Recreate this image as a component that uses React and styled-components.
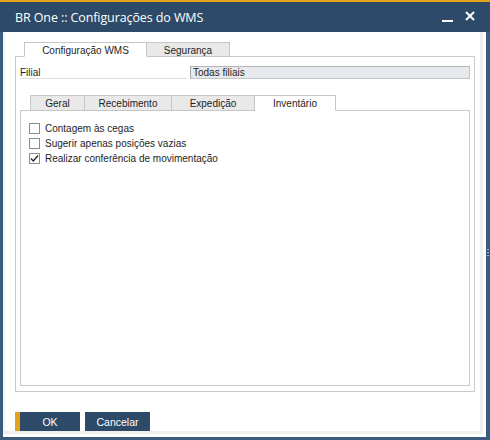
import React, { useState } from 'react';
import styled, { createGlobalStyle } from 'styled-components';

const GlobalStyle = createGlobalStyle`
  html, body {
    margin: 0;
    padding: 0;
    background: #ffffff;
  }
  body {
    font-family: "Liberation Sans", Arial, sans-serif;
  }
`;

const Window = styled.div`
  width: 490px;
  height: 440px;
  box-sizing: border-box;
  display: flex;
  flex-direction: column;
  background: #2d4a69;
  border-top: 1px solid #e3a21a;
  box-shadow: inset 0 1px 0 #e3a21a;
  position: relative;
`;

const TitleBar = styled.div`
  height: 31px;
  display: flex;
  align-items: center;
  padding: 0 14px 0 15px;
  color: #ffffff;
  flex-shrink: 0;
`;

const Title = styled.div`
  flex: 1;
  font-family: "Open Sans", "Noto Sans", sans-serif;
  font-size: 12.5px;
  letter-spacing: -0.1px;
  padding-top: 1px;
`;

const WinButtons = styled.div`
  display: flex;
  align-items: center;
  gap: 12px;
`;

const WinButton = styled.button`
  border: 0;
  background: none;
  padding: 0;
  width: 11px;
  height: 11px;
  display: flex;
  color: #ffffff;
  cursor: pointer;
`;

const Frame = styled.div`
  flex: 1;
  display: flex;
  padding: 0 4px 3px 3px;
  background: #3a5b7c;
`;

const Body = styled.div`
  flex: 1;
  display: flex;
  background: #ffffff;
  padding: 0 3px 3px 0;
`;

const Inner = styled.div`
  flex: 1;
  display: flex;
  flex-direction: column;
  border-right: 3px solid #efefef;
  border-bottom: 3px solid #efefef;
  border-left: 2px solid #f4f4f4;
  padding: 10px 5px 0 10px;
  font-size: 10px;
  color: #1e1e1e;
`;

const TabRow = styled.div`
  display: flex;
  height: ${(p) => p.$h}px;
  margin-left: ${(p) => p.$indent}px;
  position: relative;
  z-index: 1;
  flex-shrink: 0;
`;

const Tab = styled.div`
  width: ${(p) => p.$w}px;
  box-sizing: border-box;
  display: flex;
  align-items: center;
  justify-content: center;
  border: 1px solid #c6c6c6;
  border-left-width: ${(p) => (p.$first ? 1 : 0)}px;
  border-bottom: ${(p) => (p.$active ? '1px solid #ffffff' : '1px solid #c6c6c6')};
  background: ${(p) => (p.$active ? '#ffffff' : '#e9e9e9')};
  color: #1e1e1e;
  padding-top: 1px;
  cursor: default;
`;

const Panel = styled.div`
  flex: 1;
  display: flex;
  flex-direction: column;
  border: 1px solid #c9c9c9;
  margin-top: -1px;
  margin-bottom: ${(p) => p.$mb || 0}px;
  margin-left: ${(p) => p.$ml || 0}px;
  margin-right: ${(p) => p.$mr || 0}px;
  padding: ${(p) => p.$pad};
`;

const FieldRow = styled.div`
  display: flex;
  height: 13px;
  padding: 0 4px;
  margin-bottom: 16px;
`;

const Label = styled.div`
  width: 167px;
  border-bottom: 1px solid #dcdcdc;
  display: flex;
  align-items: center;
  margin-right: 3px;
`;

const ReadOnly = styled.div`
  flex: 1;
  box-sizing: border-box;
  background: #e6eaee;
  border: 1px solid #c4c4c4;
  border-top-color: #b4b4b4;
  border-left-color: #a8a8a8;
  display: flex;
  align-items: center;
  padding-left: 2px;
`;

const CheckList = styled.div`
  display: flex;
  flex-direction: column;
  gap: 3px;
  padding: 11px 0 0 8px;
`;

const CheckRow = styled.label`
  display: flex;
  align-items: center;
  gap: 5px;
  height: 12px;
  cursor: pointer;
`;

const Box = styled.span`
  width: 11px;
  height: 11px;
  box-sizing: border-box;
  border: 1px solid #8c8c8c;
  background: #ffffff;
  display: flex;
  align-items: center;
  justify-content: center;
`;

const Footer = styled.div`
  display: flex;
  gap: 5px;
  padding: 20px 0 0 0;
  flex-shrink: 0;
`;

const Button = styled.button`
  width: 65px;
  height: 19px;
  border: 0;
  border-left: ${(p) => (p.$primary ? '5px solid #e3a21a' : '0')};
  background: #2d4a69;
  color: #ffffff;
  font-family: "Liberation Sans", Arial, sans-serif;
  font-size: 10.5px;
  padding: 0;
  cursor: pointer;
`;

const Grip = styled.div`
  position: absolute;
  right: 1px;
  top: 248px;
  width: 2px;
  height: 9px;
  background: repeating-linear-gradient(#9fb4c9 0 1px, transparent 1px 3px);
`;

const topTabs = [
  { label: 'Configuração WMS', w: 123 },
  { label: 'Segurança', w: 83 },
];

const innerTabs = [
  { label: 'Geral', w: 55 },
  { label: 'Recebimento', w: 87 },
  { label: 'Expedição', w: 83 },
  { label: 'Inventário', w: 81 },
];

function Check({ checked, onToggle, children }) {
  return (
    <CheckRow onClick={onToggle}>
      <Box>
        {checked && (
          <svg width="9" height="9" viewBox="0 0 9 9">
            <path d="M1 4.5 L3.3 7 L8 1.5" fill="none" stroke="#222" strokeWidth="1.3" />
          </svg>
        )}
      </Box>
      {children}
    </CheckRow>
  );
}

export default function App() {
  const [top, setTop] = useState(0);
  const [inner, setInner] = useState(3);
  const [checks, setChecks] = useState([false, false, true]);
  const toggle = (i) => setChecks((c) => c.map((v, j) => (j === i ? !v : v)));
  const labels = [
    'Contagem às cegas',
    'Sugerir apenas posições vazias',
    'Realizar conferência de movimentação',
  ];

  return (
    <>
      <GlobalStyle />
      <Window>
        <TitleBar>
          <Title>BR One :: Configurações do WMS</Title>
          <WinButtons>
            <WinButton aria-label="minimizar">
              <svg width="11" height="11" viewBox="0 0 11 11">
                <rect x="0" y="9" width="11" height="2" fill="#fff" />
              </svg>
            </WinButton>
            <WinButton aria-label="fechar">
              <svg width="10" height="10" viewBox="0 0 10 10">
                <path d="M1 1 L9 9 M9 1 L1 9" stroke="#fff" strokeWidth="2" />
              </svg>
            </WinButton>
          </WinButtons>
        </TitleBar>
        <Frame>
          <Body>
            <Inner>
              <TabRow $h={15} $indent={9}>
                {topTabs.map((t, i) => (
                  <Tab key={t.label} $w={t.w} $first={i === 0} $active={top === i} onClick={() => setTop(i)}>
                    {t.label}
                  </Tab>
                ))}
              </TabRow>
              <Panel $pad="9px 0 0 0">
                <FieldRow>
                  <Label>Filial</Label>
                  <ReadOnly>Todas filiais</ReadOnly>
                </FieldRow>
                <TabRow $h={16} $indent={14}>
                  {innerTabs.map((t, i) => (
                    <Tab key={t.label} $w={t.w} $first={i === 0} $active={inner === i} onClick={() => setInner(i)}>
                      {t.label}
                    </Tab>
                  ))}
                </TabRow>
                <Panel $ml={4} $mr={4} $mb={5} $pad="0">
                  <CheckList>
                    {labels.map((l, i) => (
                      <Check key={l} checked={checks[i]} onToggle={() => toggle(i)}>
                        {l}
                      </Check>
                    ))}
                  </CheckList>
                </Panel>
              </Panel>
              <Footer>
                <Button $primary>OK</Button>
                <Button>Cancelar</Button>
              </Footer>
            </Inner>
          </Body>
        </Frame>
        <Grip />
      </Window>
    </>
  );
}
